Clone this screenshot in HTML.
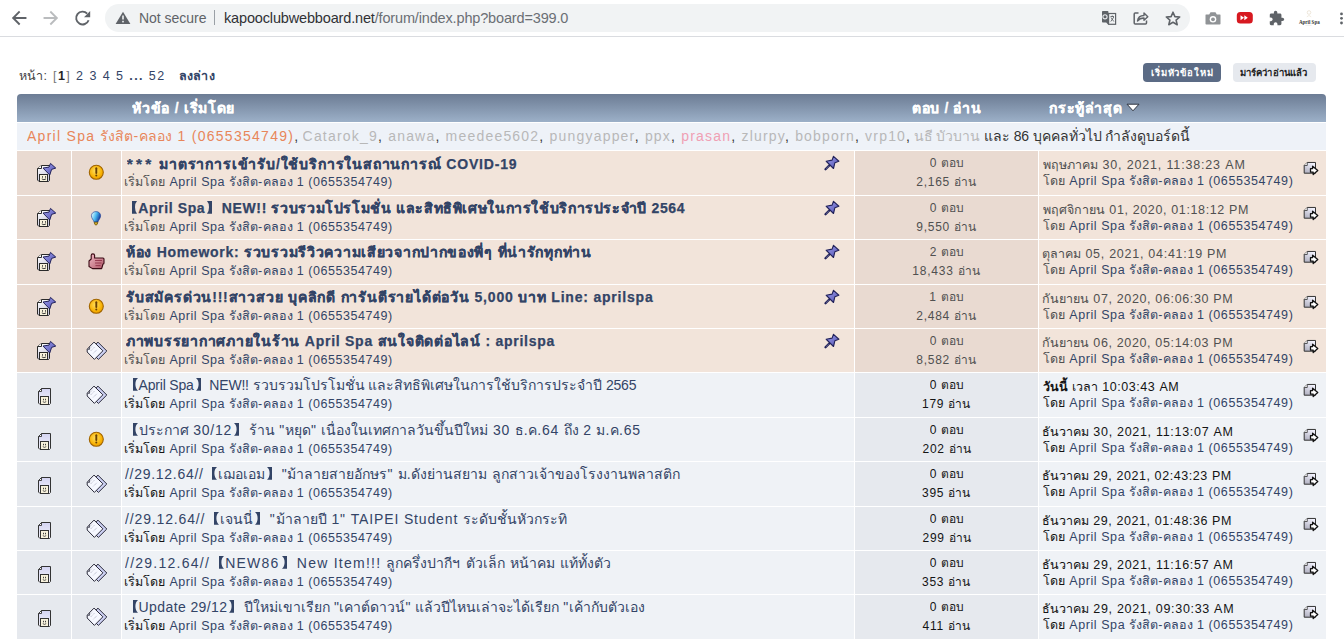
<!DOCTYPE html><html><head><meta charset="utf-8"><style>html,body{margin:0;padding:0}
body{width:1344px;height:640px;overflow:hidden;position:relative;background:#fff;font-family:"Liberation Sans",sans-serif}
.tx{position:absolute;white-space:nowrap;line-height:1}
.a{position:absolute}
svg{position:absolute;overflow:visible}
.tx .l{letter-spacing:var(--ls)}
</style></head><body><svg width="0" height="0" style="position:absolute"><defs>
<linearGradient id="gdoc" x1="0.2" y1="0" x2="0.6" y2="1"><stop offset="0" stop-color="#ffffff"/><stop offset="1" stop-color="#c4c4dc"/></linearGradient>
<linearGradient id="gdoc3" x1="0" y1="0" x2="0" y2="1"><stop offset="0" stop-color="#d4d4f2"/><stop offset="1" stop-color="#f4f4fc"/></linearGradient>
<linearGradient id="gthumb" x1="0" y1="0" x2="1" y2="1"><stop offset="0" stop-color="#f0b8c4"/><stop offset="1" stop-color="#b05868"/></linearGradient>
<linearGradient id="gdoc2" x1="0.7" y1="0" x2="0.2" y2="1"><stop offset="0" stop-color="#f4f4ff"/><stop offset="1" stop-color="#b0b0c0"/></linearGradient>
<radialGradient id="gexc" cx="0.45" cy="0.4" r="0.65"><stop offset="0" stop-color="#ffe060"/><stop offset="0.7" stop-color="#f8b000"/><stop offset="1" stop-color="#e89800"/></radialGradient>
<linearGradient id="gpin" x1="0" y1="0" x2="1" y2="1"><stop offset="0" stop-color="#a0a0ee"/><stop offset="1" stop-color="#5050b0"/></linearGradient>
<linearGradient id="gbulb" x1="0" y1="0.2" x2="1" y2="0.6"><stop offset="0" stop-color="#e8ffff"/><stop offset="0.5" stop-color="#48b8f0"/><stop offset="1" stop-color="#102a90"/></linearGradient>
<g id="ic_topic">
 <path d="M11.5 8.5H20.5V23.5L19.5 24.5H10L8.5 23V11.5Z" fill="url(#gdoc3)" stroke="#333" stroke-width="1"/>
 <path d="M8.5 11.5H11.5V8.5Z" fill="#fff" stroke="#333" stroke-width="0.9" stroke-linejoin="round"/>
 <rect x="10.5" y="16.5" width="8" height="8" fill="#f8f2dc" stroke="#333" stroke-width="1"/>
 <path d="M13.5 18.8v1.5M15.5 18.8v1.5" stroke="#444" stroke-width="1"/>
 <path d="M12.8 21.6Q14.5 23.2 16.2 21.6" fill="none" stroke="#444" stroke-width="0.9"/>
</g>
<g id="ic_pinned">
 <path d="M7.5 5.5H15.5V20.5L14.5 21.5H5L3.5 20V8.5Z" fill="url(#gdoc)" stroke="#2a2a2a" stroke-width="1"/>
 <path d="M3.5 8.5H7.5V5.5" fill="#fff" stroke="#2a2a2a" stroke-width="1"/>
 <path d="M16.5 3.4L21.75 8.06L17.6 9.4L15.75 15L9 8.06L15 7.1Z" fill="url(#gpin)" stroke="#22225a" stroke-width="1" stroke-linejoin="round"/>
 <rect x="5.5" y="14.5" width="8" height="7" fill="#f8f2dc" stroke="#2a2a2a" stroke-width="1"/>
 <path d="M8.5 16.2v1.5M11.5 16.2v1.5" stroke="#3a3a3a" stroke-width="1"/>
 <path d="M7.8 18.9Q9.9 20.5 12 18.9" fill="none" stroke="#3a3a3a" stroke-width="1"/>
</g>
<g id="ic_exc">
 <circle cx="14.3" cy="14.3" r="7" fill="url(#gexc)" stroke="#a06400" stroke-width="1.1"/>
 <path d="M14.3 10.2V15" stroke="#6a4000" stroke-width="1.9" stroke-linecap="round"/>
 <circle cx="14.3" cy="17.6" r="1" fill="#6a4000"/>
</g>
<g id="ic_xx">
 <path d="M15.9 6.1L24.8 15L16.4 23.4L8 15Z" fill="#ccd0f2" stroke="#2a2a3a" stroke-width="1" stroke-linejoin="round"/>
 <path d="M12 6.1L20.9 14.8L12.4 23.4L5.2 16V13.4L7 11.2Z" fill="#f6f8ff" stroke="#2a2a3a" stroke-width="1" stroke-linejoin="round"/>
 <path d="M5.4 13.3H7.6V11.2" fill="none" stroke="#2a2a3a" stroke-width="0.8"/>
 <path d="M9 11.5l1.6 -1.6M8.8 14.8l3.6 -3.6M11.3 17.3l3.6 -3.6" stroke="#9092a8" stroke-width="0.7" stroke-dasharray="1 0.9"/>
</g>
<g id="ic_bulb">
 <path d="M14 8.6C16.8 8.6 18.6 10.4 18.6 12.8C18.6 15.2 16.6 16.8 15.9 19H12.1C11.4 16.8 9.4 15.2 9.4 12.8C9.4 10.4 11.2 8.6 14 8.6Z" fill="url(#gbulb)" stroke="#183890" stroke-width="0.6"/>
 <path d="M12.1 19.2H15.9L15.3 21.2L14 22.2L12.7 21.2Z" fill="#d0a828" stroke="#4a3a00" stroke-width="0.6"/>
</g>
<g id="ic_thumb">
 <path d="M7 14L9.2 12V8.4C9.2 7.5 10 6.9 10.9 6.9C11.8 6.9 12.6 7.5 12.6 8.4V11H21A1 1 0 0 1 22 12V16A1 1 0 0 1 21 17L20 20.5A1 1 0 0 1 19 21.6H10.5L7 19.5Z" fill="url(#gthumb)" stroke="#3a0a14" stroke-width="1.1" stroke-linejoin="round"/>
 <path d="M13 13.5H20M13 16H19.5M13.5 18.6H18.5" stroke="#8a2a40" stroke-width="0.8"/>
</g>
<g id="ic_pin">
 <path d="M11.5 15.2L7.5 19.3" stroke="#22225a" stroke-width="2.3" stroke-linecap="round"/>
 <path d="M11 15.8L8 18.8" stroke="#d0d0e8" stroke-width="0.6" stroke-dasharray="0.8 0.9"/>
 <path d="M15.5 6.3L20.9 11.25L16.9 12.7L15.5 18.5L8.2 11.25L14.1 10.1Z" fill="url(#gpin)" stroke="#22225a" stroke-width="1.1" stroke-linejoin="round"/>
</g>
<g id="ic_last">
 <path d="M11.25 4.45H19.5V15.2H8.2V7.5Z" fill="url(#gdoc2)" stroke="#333" stroke-width="1"/>
 <path d="M8.2 7.5H11.25V4.45" fill="#fff" stroke="#333" stroke-width="0.8"/>
 <path d="M14.5 10.6H16.6V8.2L21.8 12.4L17.2 16.6V14.2H14.5Z" fill="#fff" stroke="#111" stroke-width="1.3" stroke-linejoin="round"/>
</g>
</defs></svg>
<div class="a" style="left:0;top:0;width:1344px;height:36px;background:#ffffff"></div>
<div class="a" style="left:0;top:36px;width:1344px;height:1px;background:#dadce0"></div>
<svg style="left:0;top:0" width="100" height="36"><g fill="none" stroke-width="1.9" stroke-linecap="square"><path d="M25.5 18H13.5M19 12.2L13.2 18L19 23.8" stroke="#5f6368"/><path d="M44.5 18H56.5M51 12.2L56.8 18L51 23.8" stroke="#babcbe"/><path d="M88.6 20.2A6.4 6.4 0 1 1 87.2 13.6" stroke="#5f6368" stroke-linecap="butt"/></g><path d="M90.2 11v6.2H84z" fill="#5f6368"/></svg>
<div class="a" style="left:105px;top:4px;width:1085px;height:28px;border-radius:14px;background:#f1f3f4"></div>
<svg style="left:0;top:0" width="140" height="36"><path d="M123 11.8L130.4 24H115.6z" fill="#5f6368"/><rect x="122.2" y="15.5" width="1.6" height="4" fill="#f1f3f4"/><rect x="122.2" y="20.8" width="1.6" height="1.6" fill="#f1f3f4"/></svg>
<div class="a" style="left:214px;top:10px;width:1px;height:15px;background:#9aa0a6"></div>
<svg style="left:1090px;top:0" width="254" height="36"><path d="M12.8 11H17.6A0.8 0.8 0 0 1 18.4 11.8V22.5H16.2L18 24.6V22.5H12.8A0.8 0.8 0 0 1 12 21.7V11.8A0.8 0.8 0 0 1 12.8 11Z" fill="#5f6368"/><circle cx="15" cy="16.8" r="2.1" fill="none" stroke="#e8eaed" stroke-width="1.1"/><rect x="18.6" y="13.5" width="7" height="10.8" fill="#f1f3f4" stroke="#5f6368" stroke-width="1.2"/><path d="M20.5 16.5H24M22.3 15.5V16.5M20.8 21.5L23.8 17M21 17.5L23.8 21.5" stroke="#5f6368" stroke-width="0.9"/><path d="M48.5 13H45.2A1 1 0 0 0 44.2 14V23A1 1 0 0 0 45.2 24H55.5A1 1 0 0 0 56.5 23V20.5" fill="none" stroke="#5f6368" stroke-width="1.5"/><path d="M47.5 21C48 17 51 15.5 54 15.5V13L57.8 16.8L54 20.3V18C51.5 18 49 19 47.5 21Z" fill="none" stroke="#5f6368" stroke-width="1.4" stroke-linejoin="round"/><path d="M83 12.2L84.9 16.6L89.7 17L86.1 20.1L87.2 24.7L83 22.3L78.8 24.7L79.9 20.1L76.3 17L81.1 16.6Z" fill="none" stroke="#5f6368" stroke-width="1.6" stroke-linejoin="round"/><path d="M116 14.5H119.2L120.5 12.3H125.5L126.8 14.5H130A0.8 0.8 0 0 1 130.5 15.3V23.8A0.8 0.8 0 0 1 129.7 24.6H116.3A0.8 0.8 0 0 1 115.5 23.8V15.3A0.8 0.8 0 0 1 116 14.5Z" fill="#909396"/><circle cx="123" cy="19.3" r="3.3" fill="#fff"/><circle cx="123" cy="19.3" r="1.9" fill="#909396"/><rect x="146.8" y="12" width="16" height="11.5" rx="3.5" fill="#d71920"/><path d="M150.5 15.2L154 17.75L150.5 20.3ZM154.3 15.2L157.8 17.75L154.3 20.3Z" fill="#fff"/><path transform="translate(178.4 10.1) scale(0.686)" d="M20.5 11H19V7c0-1.1-.9-2-2-2h-4V3.5C13 2.12 11.88 1 10.5 1S8 2.12 8 3.5V5H4c-1.1 0-1.99.9-1.99 2v3.8H3.5c1.49 0 2.7 1.21 2.7 2.7s-1.21 2.7-2.7 2.7H2V20c0 1.1.9 2 2 2h3.8v-1.5c0-1.49 1.21-2.7 2.7-2.7 1.49 0 2.7 1.21 2.7 2.7V22H17c1.1 0 2-.9 2-2v-4h1.5c1.38 0 2.5-1.12 2.5-2.5S21.88 11 20.5 11z" fill="#5f6368"/><circle cx="219" cy="12.5" r="1.8" fill="none" stroke="#e6dccb" stroke-width="0.7"/><path d="M216.8 16.8q2.2 -2.6 4.4 0" fill="none" stroke="#ebe3d3" stroke-width="0.7"/><text x="208.9" y="23.6" font-family="Liberation Serif" font-size="6.6" font-weight="bold" textLength="20.8" lengthAdjust="spacingAndGlyphs" fill="#333">April Spa</text><path d="M215.5 25.3h6" stroke="#dcdcdc" stroke-width="0.5"/><circle cx="251.5" cy="13.9" r="1.4" fill="#5f6368"/><circle cx="251.5" cy="18.3" r="1.4" fill="#5f6368"/><circle cx="251.5" cy="23" r="1.4" fill="#5f6368"/></svg>
<div class="a" style="left:1143px;top:63px;width:78px;height:19px;border-radius:4px;background:#5b6b85"></div>
<div class="a" style="left:1233px;top:63px;width:83px;height:19px;border-radius:4px;background:#e6e9ee"></div>
<div class="a" style="left:17px;top:94px;width:1309px;height:28px;border-radius:4px 4px 0 0;background:linear-gradient(#6c7c94,#9cb0c8)"></div>
<svg style="left:1126px;top:103px" width="14" height="9"><path d="M1 1.2H13L7 7.8Z" fill="#fff" stroke="#2e3440" stroke-width="1"/></svg>
<div class="a" style="left:17px;top:122px;width:1309px;height:1px;background:#ffffff"></div>
<div class="a" style="left:17px;top:123px;width:1309px;height:27px;background:#eef2f8"></div>
<div class="a" style="left:17px;top:150px;width:1309px;height:490px;background:#ffffff"></div>
<div class="a" style="left:17px;top:151px;width:54px;height:44px;background:#e9dad1"></div>
<div class="a" style="left:72px;top:151px;width:49px;height:44px;background:#e9dad1"></div>
<div class="a" style="left:122px;top:151px;width:732px;height:44px;background:#f2e4da"></div>
<div class="a" style="left:855px;top:151px;width:183px;height:44px;background:#e9dad1"></div>
<div class="a" style="left:1039px;top:151px;width:287px;height:44px;background:#f2e4da"></div>
<svg style="left:34px;top:160px" width="24" height="24"><use href="#ic_pinned"/></svg>
<svg style="left:82px;top:158px" width="30" height="30"><use href="#ic_exc"/></svg>
<svg style="left:818px;top:150px" width="30" height="30"><use href="#ic_pin"/></svg>
<svg style="left:1296px;top:158px" width="30" height="30"><use href="#ic_last"/></svg>
<div class="a" style="left:17px;top:196px;width:54px;height:43px;background:#e9dad1"></div>
<div class="a" style="left:72px;top:196px;width:49px;height:43px;background:#e9dad1"></div>
<div class="a" style="left:122px;top:196px;width:732px;height:43px;background:#f2e4da"></div>
<div class="a" style="left:855px;top:196px;width:183px;height:43px;background:#e9dad1"></div>
<div class="a" style="left:1039px;top:196px;width:287px;height:43px;background:#f2e4da"></div>
<svg style="left:34px;top:205px" width="24" height="24"><use href="#ic_pinned"/></svg>
<svg style="left:82px;top:203px" width="30" height="30"><use href="#ic_bulb"/></svg>
<svg style="left:818px;top:195px" width="30" height="30"><use href="#ic_pin"/></svg>
<svg style="left:1296px;top:203px" width="30" height="30"><use href="#ic_last"/></svg>
<div class="a" style="left:17px;top:240px;width:54px;height:44px;background:#e9dad1"></div>
<div class="a" style="left:72px;top:240px;width:49px;height:44px;background:#e9dad1"></div>
<div class="a" style="left:122px;top:240px;width:732px;height:44px;background:#f2e4da"></div>
<div class="a" style="left:855px;top:240px;width:183px;height:44px;background:#e9dad1"></div>
<div class="a" style="left:1039px;top:240px;width:287px;height:44px;background:#f2e4da"></div>
<svg style="left:34px;top:249px" width="24" height="24"><use href="#ic_pinned"/></svg>
<svg style="left:82px;top:247px" width="30" height="30"><use href="#ic_thumb"/></svg>
<svg style="left:818px;top:239px" width="30" height="30"><use href="#ic_pin"/></svg>
<svg style="left:1296px;top:247px" width="30" height="30"><use href="#ic_last"/></svg>
<div class="a" style="left:17px;top:285px;width:54px;height:43px;background:#e9dad1"></div>
<div class="a" style="left:72px;top:285px;width:49px;height:43px;background:#e9dad1"></div>
<div class="a" style="left:122px;top:285px;width:732px;height:43px;background:#f2e4da"></div>
<div class="a" style="left:855px;top:285px;width:183px;height:43px;background:#e9dad1"></div>
<div class="a" style="left:1039px;top:285px;width:287px;height:43px;background:#f2e4da"></div>
<svg style="left:34px;top:294px" width="24" height="24"><use href="#ic_pinned"/></svg>
<svg style="left:82px;top:292px" width="30" height="30"><use href="#ic_exc"/></svg>
<svg style="left:818px;top:284px" width="30" height="30"><use href="#ic_pin"/></svg>
<svg style="left:1296px;top:292px" width="30" height="30"><use href="#ic_last"/></svg>
<div class="a" style="left:17px;top:329px;width:54px;height:43px;background:#e9dad1"></div>
<div class="a" style="left:72px;top:329px;width:49px;height:43px;background:#e9dad1"></div>
<div class="a" style="left:122px;top:329px;width:732px;height:43px;background:#f2e4da"></div>
<div class="a" style="left:855px;top:329px;width:183px;height:43px;background:#e9dad1"></div>
<div class="a" style="left:1039px;top:329px;width:287px;height:43px;background:#f2e4da"></div>
<svg style="left:34px;top:338px" width="24" height="24"><use href="#ic_pinned"/></svg>
<svg style="left:82px;top:336px" width="30" height="30"><use href="#ic_xx"/></svg>
<svg style="left:818px;top:328px" width="30" height="30"><use href="#ic_pin"/></svg>
<svg style="left:1296px;top:336px" width="30" height="30"><use href="#ic_last"/></svg>
<div class="a" style="left:17px;top:373px;width:54px;height:44px;background:#e6e9ee"></div>
<div class="a" style="left:72px;top:373px;width:49px;height:44px;background:#e6e9ee"></div>
<div class="a" style="left:122px;top:373px;width:732px;height:44px;background:#eff2f6"></div>
<div class="a" style="left:855px;top:373px;width:183px;height:44px;background:#e6e9ee"></div>
<div class="a" style="left:1039px;top:373px;width:287px;height:44px;background:#eff2f6"></div>
<svg style="left:30px;top:380px" width="30" height="30"><use href="#ic_topic"/></svg>
<svg style="left:82px;top:380px" width="30" height="30"><use href="#ic_xx"/></svg>
<svg style="left:1296px;top:380px" width="30" height="30"><use href="#ic_last"/></svg>
<div class="a" style="left:17px;top:418px;width:54px;height:43px;background:#e6e9ee"></div>
<div class="a" style="left:72px;top:418px;width:49px;height:43px;background:#e6e9ee"></div>
<div class="a" style="left:122px;top:418px;width:732px;height:43px;background:#eff2f6"></div>
<div class="a" style="left:855px;top:418px;width:183px;height:43px;background:#e6e9ee"></div>
<div class="a" style="left:1039px;top:418px;width:287px;height:43px;background:#eff2f6"></div>
<svg style="left:30px;top:425px" width="30" height="30"><use href="#ic_topic"/></svg>
<svg style="left:82px;top:425px" width="30" height="30"><use href="#ic_exc"/></svg>
<svg style="left:1296px;top:425px" width="30" height="30"><use href="#ic_last"/></svg>
<div class="a" style="left:17px;top:462px;width:54px;height:44px;background:#e6e9ee"></div>
<div class="a" style="left:72px;top:462px;width:49px;height:44px;background:#e6e9ee"></div>
<div class="a" style="left:122px;top:462px;width:732px;height:44px;background:#eff2f6"></div>
<div class="a" style="left:855px;top:462px;width:183px;height:44px;background:#e6e9ee"></div>
<div class="a" style="left:1039px;top:462px;width:287px;height:44px;background:#eff2f6"></div>
<svg style="left:30px;top:469px" width="30" height="30"><use href="#ic_topic"/></svg>
<svg style="left:82px;top:469px" width="30" height="30"><use href="#ic_xx"/></svg>
<svg style="left:1296px;top:469px" width="30" height="30"><use href="#ic_last"/></svg>
<div class="a" style="left:17px;top:507px;width:54px;height:43px;background:#e6e9ee"></div>
<div class="a" style="left:72px;top:507px;width:49px;height:43px;background:#e6e9ee"></div>
<div class="a" style="left:122px;top:507px;width:732px;height:43px;background:#eff2f6"></div>
<div class="a" style="left:855px;top:507px;width:183px;height:43px;background:#e6e9ee"></div>
<div class="a" style="left:1039px;top:507px;width:287px;height:43px;background:#eff2f6"></div>
<svg style="left:30px;top:514px" width="30" height="30"><use href="#ic_topic"/></svg>
<svg style="left:82px;top:514px" width="30" height="30"><use href="#ic_xx"/></svg>
<svg style="left:1296px;top:514px" width="30" height="30"><use href="#ic_last"/></svg>
<div class="a" style="left:17px;top:551px;width:54px;height:43px;background:#e6e9ee"></div>
<div class="a" style="left:72px;top:551px;width:49px;height:43px;background:#e6e9ee"></div>
<div class="a" style="left:122px;top:551px;width:732px;height:43px;background:#eff2f6"></div>
<div class="a" style="left:855px;top:551px;width:183px;height:43px;background:#e6e9ee"></div>
<div class="a" style="left:1039px;top:551px;width:287px;height:43px;background:#eff2f6"></div>
<svg style="left:30px;top:558px" width="30" height="30"><use href="#ic_topic"/></svg>
<svg style="left:82px;top:558px" width="30" height="30"><use href="#ic_xx"/></svg>
<svg style="left:1296px;top:558px" width="30" height="30"><use href="#ic_last"/></svg>
<div class="a" style="left:17px;top:595px;width:54px;height:44px;background:#e6e9ee"></div>
<div class="a" style="left:72px;top:595px;width:49px;height:44px;background:#e6e9ee"></div>
<div class="a" style="left:122px;top:595px;width:732px;height:44px;background:#eff2f6"></div>
<div class="a" style="left:855px;top:595px;width:183px;height:44px;background:#e6e9ee"></div>
<div class="a" style="left:1039px;top:595px;width:287px;height:44px;background:#eff2f6"></div>
<svg style="left:30px;top:602px" width="30" height="30"><use href="#ic_topic"/></svg>
<svg style="left:82px;top:602px" width="30" height="30"><use href="#ic_xx"/></svg>
<svg style="left:1296px;top:602px" width="30" height="30"><use href="#ic_last"/></svg>
<div id="t0" class="tx g_misc" style="width:72.6px;overflow-x:clip;left:139.00px;top:11px;font-size:14px;color:#5f6368;font-weight:normal;letter-spacing:-0.022px">Not secure</div>
<div id="t1" class="tx g_misc" style="width:350.0px;overflow-x:clip;left:224.00px;top:11px;font-size:14.5px;color:#6b6f74;font-weight:normal;letter-spacing:-0.156px"><span style="color:#303134">kapooclubwebboard.net</span>/forum/index.php?board=399.0</div>
<div id="t2" class="tx g_misc" style="width:33.1px;overflow-x:clip;left:19.20px;top:70px;font-size:12.5px;color:#444;font-weight:normal;letter-spacing:0.135px">หน้า:</div>
<div id="t3" class="tx g_misc" style="width:117.1px;overflow-x:clip;left:53.00px;top:70px;font-size:12.5px;color:#444;font-weight:normal;letter-spacing:1.429px"><span style="color:#777">[<b style="color:#222">1</b>]</span> <span style="color:#334466">2 3 4 5 <b>...</b> 52</span></div>
<div id="t4" class="tx g_misc" style="width:42.5px;overflow-x:clip;left:178.59px;top:70px;font-size:12.5px;color:#334466;font-weight:normal;letter-spacing:0.275px"><b>ลงล่าง</b></div>
<div id="t5" class="tx g_misc" style="width:67.4px;overflow-x:clip;left:1151.20px;top:68px;font-size:9.5px;color:#ffffff;font-weight:normal;letter-spacing:0.822px"><b>เริ่มหัวข้อใหม่</b></div>
<div id="t6" class="tx g_misc" style="width:73.0px;overflow-x:clip;left:1240.00px;top:68px;font-size:9.5px;color:#222222;font-weight:normal;letter-spacing:0.091px"><b>มาร์คว่าอ่านแล้ว</b></div>
<div id="t7" class="tx g_misc" style="width:107.6px;overflow-x:clip;left:132.39px;top:101px;font-size:14px;color:#ffffff;font-weight:normal;letter-spacing:0.683px"><b style="-webkit-text-stroke:0.3px #fff">หัวข้อ / เริ่มโดย</b></div>
<div id="t8" class="tx g_misc" style="width:75.0px;overflow-x:clip;left:912.00px;top:101px;font-size:14px;color:#ffffff;font-weight:normal;letter-spacing:0.625px"><b style="-webkit-text-stroke:0.3px #fff">ตอบ / อ่าน</b></div>
<div id="t9" class="tx g_misc" style="width:78.8px;overflow-x:clip;left:1049.20px;top:101px;font-size:14px;color:#ffffff;font-weight:normal;letter-spacing:0.657px"><b style="-webkit-text-stroke:0.3px #fff">กระทู้ล่าสุด</b></div>
<div id="t10" class="tx g_info1" style="width:275.7px;overflow-x:clip;left:27.00px;top:129px;font-size:14px;color:#333333;font-weight:normal;--ls:1.273px"><span style="color:#e8865a"><span class="l">April Spa </span>รังสิต<span class="l">-</span>คลอง<span class="l"> 1 (0655354749)</span></span><span class="l">,</span></div>
<div id="t11" class="tx g_info2" style="width:612.4px;overflow-x:clip;left:302.59px;top:129px;font-size:14px;color:#333333;font-weight:normal;--ls:1.199px"><span style="color:#b8b8b8"><span class="l">Catarok_9</span></span><span class="l">, </span><span style="color:#b8b8b8"><span class="l">anawa</span></span><span class="l">, </span><span style="color:#b8b8b8"><span class="l">meedee5602</span></span><span class="l">, </span><span style="color:#b8b8b8"><span class="l">pungyapper</span></span><span class="l">, </span><span style="color:#b8b8b8"><span class="l">ppx</span></span><span class="l">, </span><span style="color:#f0a0b4"><span class="l">prasan</span></span><span class="l">, </span><span style="color:#b8b8b8"><span class="l">zlurpy</span></span><span class="l">, </span><span style="color:#b8b8b8"><span class="l">bobporn</span></span><span class="l">, </span><span style="color:#b8b8b8"><span class="l">vrp10</span></span><span class="l">,</span></div>
<div id="t12" class="tx g_info1" style="width:282.2px;overflow-x:clip;left:913.79px;top:129px;font-size:14px;color:#333333;font-weight:normal;--ls:-0.229px"><span style="color:#b8b8b8">นธี<span class="l"> </span>บัวบาน</span><span class="l"> </span>และ<span class="l"> 86 </span>บุคคลทั่วไป<span class="l"> </span>กำลังดูบอร์ดนี้</div>
<div id="t13" class="tx g_subj" style="width:395.2px;overflow-x:clip;left:126.79px;top:156px;font-size:14px;color:#334466;font-weight:bold;letter-spacing:0.823px"><span style="-webkit-text-stroke:0.25px currentColor"><span style="font-size:15.5px;letter-spacing:3.2px">***</span> มาตราการเข้ารับ/ใช้บริการในสถานการณ์ COVID-19</span></div>
<div id="t14" class="tx g_start" style="width:273.6px;overflow-x:clip;left:124.39px;top:176px;font-size:12.5px;color:#505050;font-weight:normal;--ls:0.546px"><span style="color:#505050">เริ่มโดย</span><span class="l"> </span><span style="color:#334466"><span class="l">April Spa </span>รังสิต<span class="l">-</span>คลอง<span class="l"> 1 (0655354749)</span></span></div>
<div id="t15" class="tx g_st1" style="width:39.5px;overflow-x:clip;left:929.73px;top:157px;font-size:12px;color:#505050;font-weight:normal;--ls:0.767px"><span class="l">0 </span>ตอบ</div>
<div id="t16" class="tx g_st2" style="width:66.6px;overflow-x:clip;left:916.20px;top:176px;font-size:12px;color:#505050;font-weight:normal;--ls:0.767px"><span class="l">2,165 </span>อ่าน</div>
<div id="t17" class="tx g_lp1" style="width:206.8px;overflow-x:clip;left:1043.20px;top:159px;font-size:12.5px;color:#505050;font-weight:normal;--ls:0.838px">พฤษภาคม<span class="l"> 30, 2021, 11:38:23 AM</span></div>
<div id="t18" class="tx g_lp2" style="width:254.6px;overflow-x:clip;left:1043.20px;top:175px;font-size:12.5px;color:#505050;font-weight:normal;--ls:0.577px"><span style="color:#505050">โดย</span><span class="l"> </span><span style="color:#334466"><span class="l">April Spa </span>รังสิต<span class="l">-</span>คลอง<span class="l"> 1 (0655354749)</span></span></div>
<div id="t19" class="tx g_subj" style="width:562.5px;overflow-x:clip;left:128.20px;top:201px;font-size:14px;color:#334466;font-weight:bold;letter-spacing:0.626px"><span style="-webkit-text-stroke:0.25px currentColor"><svg style="position:static;vertical-align:-1px;margin:0 1px 0 4px" width="5" height="12.7" viewBox="0 0 5 12.7"><path d="M0 0H5Q3.0 2 3.0 6.35Q3.0 10.7 5 12.7H0Z" fill="currentColor"/></svg>April Spa<svg style="position:static;vertical-align:-1px;margin:0 5px 0 2px" width="5" height="12.7" viewBox="0 0 5 12.7"><path d="M5 0H0Q2.0 2 2.0 6.35Q2.0 10.7 0 12.7H5Z" fill="currentColor"/></svg> NEW!! รวบรวมโปรโมชั่น และสิทธิพิเศษในการใช้บริการประจำปี 2564</span></div>
<div id="t20" class="tx g_start" style="width:273.6px;overflow-x:clip;left:124.39px;top:221px;font-size:12.5px;color:#505050;font-weight:normal;--ls:0.546px"><span style="color:#505050">เริ่มโดย</span><span class="l"> </span><span style="color:#334466"><span class="l">April Spa </span>รังสิต<span class="l">-</span>คลอง<span class="l"> 1 (0655354749)</span></span></div>
<div id="t21" class="tx g_st1" style="width:39.5px;overflow-x:clip;left:929.73px;top:202px;font-size:12px;color:#505050;font-weight:normal;--ls:0.767px"><span class="l">0 </span>ตอบ</div>
<div id="t22" class="tx g_st2" style="width:66.6px;overflow-x:clip;left:916.20px;top:221px;font-size:12px;color:#505050;font-weight:normal;--ls:0.767px"><span class="l">9,550 </span>อ่าน</div>
<div id="t23" class="tx g_lp1" style="width:210.7px;overflow-x:clip;left:1043.20px;top:204px;font-size:12.5px;color:#505050;font-weight:normal;--ls:0.633px">พฤศจิกายน<span class="l"> 01, 2020, 01:18:12 PM</span></div>
<div id="t24" class="tx g_lp2" style="width:254.6px;overflow-x:clip;left:1043.20px;top:220px;font-size:12.5px;color:#505050;font-weight:normal;--ls:0.577px"><span style="color:#505050">โดย</span><span class="l"> </span><span style="color:#334466"><span class="l">April Spa </span>รังสิต<span class="l">-</span>คลอง<span class="l"> 1 (0655354749)</span></span></div>
<div id="t25" class="tx g_subj" style="width:471.0px;overflow-x:clip;left:126.00px;top:245px;font-size:14px;color:#334466;font-weight:bold;letter-spacing:0.712px"><span style="-webkit-text-stroke:0.25px currentColor">ห้อง Homework: รวบรวมรีวิวความเสียวจากปากของพี่ๆ ที่น่ารักทุกท่าน</span></div>
<div id="t26" class="tx g_start" style="width:273.6px;overflow-x:clip;left:124.39px;top:265px;font-size:12.5px;color:#505050;font-weight:normal;--ls:0.546px"><span style="color:#505050">เริ่มโดย</span><span class="l"> </span><span style="color:#334466"><span class="l">April Spa </span>รังสิต<span class="l">-</span>คลอง<span class="l"> 1 (0655354749)</span></span></div>
<div id="t27" class="tx g_st1" style="width:39.5px;overflow-x:clip;left:929.73px;top:246px;font-size:12px;color:#505050;font-weight:normal;--ls:0.767px"><span class="l">2 </span>ตอบ</div>
<div id="t28" class="tx g_st2" style="width:74.4px;overflow-x:clip;left:912.32px;top:265px;font-size:12px;color:#505050;font-weight:normal;--ls:0.767px"><span class="l">18,433 </span>อ่าน</div>
<div id="t29" class="tx g_lp1" style="width:189.4px;overflow-x:clip;left:1042.20px;top:248px;font-size:12.5px;color:#505050;font-weight:normal;--ls:0.733px">ตุลาคม<span class="l"> 05, 2021, 04:41:19 PM</span></div>
<div id="t30" class="tx g_lp2" style="width:254.6px;overflow-x:clip;left:1043.20px;top:264px;font-size:12.5px;color:#505050;font-weight:normal;--ls:0.577px"><span style="color:#505050">โดย</span><span class="l"> </span><span style="color:#334466"><span class="l">April Spa </span>รังสิต<span class="l">-</span>คลอง<span class="l"> 1 (0655354749)</span></span></div>
<div id="t31" class="tx g_subj" style="width:533.4px;overflow-x:clip;left:126.00px;top:290px;font-size:14px;color:#334466;font-weight:bold;letter-spacing:0.797px"><span style="-webkit-text-stroke:0.25px currentColor">รับสมัครด่วน!!!สาวสวย บุคลิกดี การันตีรายได้ต่อวัน 5,000 บาท Line: aprilspa</span></div>
<div id="t32" class="tx g_start" style="width:273.6px;overflow-x:clip;left:124.39px;top:310px;font-size:12.5px;color:#505050;font-weight:normal;--ls:0.546px"><span style="color:#505050">เริ่มโดย</span><span class="l"> </span><span style="color:#334466"><span class="l">April Spa </span>รังสิต<span class="l">-</span>คลอง<span class="l"> 1 (0655354749)</span></span></div>
<div id="t33" class="tx g_st1" style="width:40.5px;overflow-x:clip;left:929.23px;top:291px;font-size:12px;color:#505050;font-weight:normal;--ls:0.767px"><span class="l">1 </span>ตอบ</div>
<div id="t34" class="tx g_st2" style="width:66.6px;overflow-x:clip;left:916.20px;top:310px;font-size:12px;color:#505050;font-weight:normal;--ls:0.767px"><span class="l">2,484 </span>อ่าน</div>
<div id="t35" class="tx g_lp1" style="width:196.1px;overflow-x:clip;left:1042.20px;top:293px;font-size:12.5px;color:#505050;font-weight:normal;--ls:0.643px">กันยายน<span class="l"> 07, 2020, 06:06:30 PM</span></div>
<div id="t36" class="tx g_lp2" style="width:254.6px;overflow-x:clip;left:1043.20px;top:309px;font-size:12.5px;color:#505050;font-weight:normal;--ls:0.577px"><span style="color:#505050">โดย</span><span class="l"> </span><span style="color:#334466"><span class="l">April Spa </span>รังสิต<span class="l">-</span>คลอง<span class="l"> 1 (0655354749)</span></span></div>
<div id="t37" class="tx g_subj" style="width:435.0px;overflow-x:clip;left:126.00px;top:334px;font-size:14px;color:#334466;font-weight:bold;letter-spacing:0.745px"><span style="-webkit-text-stroke:0.25px currentColor">ภาพบรรยากาศภายในร้าน April Spa สนใจติดต่อไลน์ : aprilspa</span></div>
<div id="t38" class="tx g_start" style="width:273.6px;overflow-x:clip;left:124.39px;top:354px;font-size:12.5px;color:#505050;font-weight:normal;--ls:0.546px"><span style="color:#505050">เริ่มโดย</span><span class="l"> </span><span style="color:#334466"><span class="l">April Spa </span>รังสิต<span class="l">-</span>คลอง<span class="l"> 1 (0655354749)</span></span></div>
<div id="t39" class="tx g_st1" style="width:39.5px;overflow-x:clip;left:929.73px;top:335px;font-size:12px;color:#505050;font-weight:normal;--ls:0.767px"><span class="l">0 </span>ตอบ</div>
<div id="t40" class="tx g_st2" style="width:66.6px;overflow-x:clip;left:916.20px;top:354px;font-size:12px;color:#505050;font-weight:normal;--ls:0.767px"><span class="l">8,582 </span>อ่าน</div>
<div id="t41" class="tx g_lp1" style="width:196.1px;overflow-x:clip;left:1042.20px;top:337px;font-size:12.5px;color:#505050;font-weight:normal;--ls:0.643px">กันยายน<span class="l"> 06, 2020, 05:14:03 PM</span></div>
<div id="t42" class="tx g_lp2" style="width:254.6px;overflow-x:clip;left:1043.20px;top:353px;font-size:12.5px;color:#505050;font-weight:normal;--ls:0.577px"><span style="color:#505050">โดย</span><span class="l"> </span><span style="color:#334466"><span class="l">April Spa </span>รังสิต<span class="l">-</span>คลอง<span class="l"> 1 (0655354749)</span></span></div>
<div id="t43" class="tx g_subj" style="width:513.6px;overflow-x:clip;left:128.59px;top:378px;font-size:14px;color:#334466;font-weight:normal;--ls:-0.195px"><svg style="position:static;vertical-align:-1px;margin:0 1px 0 4px" width="5" height="12.7" viewBox="0 0 5 12.7"><path d="M0 0H5Q2.4 2 2.4 6.35Q2.4 10.7 5 12.7H0Z" fill="currentColor"/></svg><span class="l">April Spa</span><svg style="position:static;vertical-align:-1px;margin:0 5px 0 2px" width="5" height="12.7" viewBox="0 0 5 12.7"><path d="M5 0H0Q2.6 2 2.6 6.35Q2.6 10.7 0 12.7H5Z" fill="currentColor"/></svg><span class="l"> NEW!! </span>รวบรวมโปรโมชั่น<span class="l"> </span>และสิทธิพิเศษในการใช้บริการประจำปี<span class="l"> 2565</span></div>
<div id="t44" class="tx g_start" style="width:273.6px;overflow-x:clip;left:124.39px;top:398px;font-size:12.5px;color:#141414;font-weight:normal;--ls:0.546px"><span style="color:#141414">เริ่มโดย</span><span class="l"> </span><span style="color:#334466"><span class="l">April Spa </span>รังสิต<span class="l">-</span>คลอง<span class="l"> 1 (0655354749)</span></span></div>
<div id="t45" class="tx g_st1" style="width:39.5px;overflow-x:clip;left:929.73px;top:379px;font-size:12px;color:#141414;font-weight:normal;--ls:0.767px"><span class="l">0 </span>ตอบ</div>
<div id="t46" class="tx g_st2" style="width:55.1px;overflow-x:clip;left:921.97px;top:398px;font-size:12px;color:#141414;font-weight:normal;--ls:0.767px"><span class="l">179 </span>อ่าน</div>
<div id="t47" class="tx g_lp1" style="width:140.5px;overflow-x:clip;left:1043.20px;top:381px;font-size:12.5px;color:#141414;font-weight:normal;--ls:0.558px"><b>วันนี้</b><span class="l"> </span>เวลา<span class="l"> 10:03:43 AM</span></div>
<div id="t48" class="tx g_lp2" style="width:254.6px;overflow-x:clip;left:1043.20px;top:397px;font-size:12.5px;color:#141414;font-weight:normal;--ls:0.577px"><span style="color:#141414">โดย</span><span class="l"> </span><span style="color:#334466"><span class="l">April Spa </span>รังสิต<span class="l">-</span>คลอง<span class="l"> 1 (0655354749)</span></span></div>
<div id="t49" class="tx g_subj" style="width:517.4px;overflow-x:clip;left:128.59px;top:423px;font-size:14px;color:#334466;font-weight:normal;--ls:0.742px"><svg style="position:static;vertical-align:-1px;margin:0 1px 0 4px" width="5" height="12.7" viewBox="0 0 5 12.7"><path d="M0 0H5Q2.4 2 2.4 6.35Q2.4 10.7 5 12.7H0Z" fill="currentColor"/></svg>ประกาศ<span class="l"> 30/12</span><svg style="position:static;vertical-align:-1px;margin:0 5px 0 2px" width="5" height="12.7" viewBox="0 0 5 12.7"><path d="M5 0H0Q2.6 2 2.6 6.35Q2.6 10.7 0 12.7H5Z" fill="currentColor"/></svg><span class="l"> </span>ร้าน<span class="l"> "</span>หยุด<span class="l">" </span>เนื่องในเทศกาลวันขึ้นปีใหม่<span class="l"> 30 </span>ธ<span class="l">.</span>ค<span class="l">.64 </span>ถึง<span class="l"> 2 </span>ม<span class="l">.</span>ค<span class="l">.65</span></div>
<div id="t50" class="tx g_start" style="width:273.6px;overflow-x:clip;left:124.39px;top:443px;font-size:12.5px;color:#141414;font-weight:normal;--ls:0.546px"><span style="color:#141414">เริ่มโดย</span><span class="l"> </span><span style="color:#334466"><span class="l">April Spa </span>รังสิต<span class="l">-</span>คลอง<span class="l"> 1 (0655354749)</span></span></div>
<div id="t51" class="tx g_st1" style="width:39.5px;overflow-x:clip;left:929.73px;top:424px;font-size:12px;color:#141414;font-weight:normal;--ls:0.767px"><span class="l">0 </span>ตอบ</div>
<div id="t52" class="tx g_st2" style="width:54.1px;overflow-x:clip;left:922.47px;top:443px;font-size:12px;color:#141414;font-weight:normal;--ls:0.767px"><span class="l">202 </span>อ่าน</div>
<div id="t53" class="tx g_lp1" style="width:195.5px;overflow-x:clip;left:1042.20px;top:426px;font-size:12.5px;color:#141414;font-weight:normal;--ls:0.700px">ธันวาคม<span class="l"> 30, 2021, 11:13:07 AM</span></div>
<div id="t54" class="tx g_lp2" style="width:254.6px;overflow-x:clip;left:1043.20px;top:442px;font-size:12.5px;color:#141414;font-weight:normal;--ls:0.577px"><span style="color:#141414">โดย</span><span class="l"> </span><span style="color:#334466"><span class="l">April Spa </span>รังสิต<span class="l">-</span>คลอง<span class="l"> 1 (0655354749)</span></span></div>
<div id="t55" class="tx g_subj" style="width:561.5px;overflow-x:clip;left:125.00px;top:467px;font-size:14px;color:#334466;font-weight:normal;--ls:0.711px"><span class="l">//29.12.64// </span><svg style="position:static;vertical-align:-1px;margin:0 1px 0 4px" width="5" height="12.7" viewBox="0 0 5 12.7"><path d="M0 0H5Q2.4 2 2.4 6.35Q2.4 10.7 5 12.7H0Z" fill="currentColor"/></svg>เฌอเอม<svg style="position:static;vertical-align:-1px;margin:0 5px 0 2px" width="5" height="12.7" viewBox="0 0 5 12.7"><path d="M5 0H0Q2.6 2 2.6 6.35Q2.6 10.7 0 12.7H5Z" fill="currentColor"/></svg><span class="l"> "</span>ม้าลายสายอักษร<span class="l">" </span>ม<span class="l">.</span>ดังย่านสยาม<span class="l"> </span>ลูกสาวเจ้าของโรงงานพลาสติก</div>
<div id="t56" class="tx g_start" style="width:273.6px;overflow-x:clip;left:124.39px;top:487px;font-size:12.5px;color:#141414;font-weight:normal;--ls:0.546px"><span style="color:#141414">เริ่มโดย</span><span class="l"> </span><span style="color:#334466"><span class="l">April Spa </span>รังสิต<span class="l">-</span>คลอง<span class="l"> 1 (0655354749)</span></span></div>
<div id="t57" class="tx g_st1" style="width:39.5px;overflow-x:clip;left:929.73px;top:468px;font-size:12px;color:#141414;font-weight:normal;--ls:0.767px"><span class="l">0 </span>ตอบ</div>
<div id="t58" class="tx g_st2" style="width:55.1px;overflow-x:clip;left:921.97px;top:487px;font-size:12px;color:#141414;font-weight:normal;--ls:0.767px"><span class="l">395 </span>อ่าน</div>
<div id="t59" class="tx g_lp1" style="width:194.3px;overflow-x:clip;left:1042.20px;top:470px;font-size:12.5px;color:#141414;font-weight:normal;--ls:0.576px">ธันวาคม<span class="l"> 29, 2021, 02:43:23 PM</span></div>
<div id="t60" class="tx g_lp2" style="width:254.6px;overflow-x:clip;left:1043.20px;top:486px;font-size:12.5px;color:#141414;font-weight:normal;--ls:0.577px"><span style="color:#141414">โดย</span><span class="l"> </span><span style="color:#334466"><span class="l">April Spa </span>รังสิต<span class="l">-</span>คลอง<span class="l"> 1 (0655354749)</span></span></div>
<div id="t61" class="tx g_subj" style="width:448.4px;overflow-x:clip;left:125.00px;top:512px;font-size:14px;color:#334466;font-weight:normal;--ls:0.859px"><span class="l">//29.12.64// </span><svg style="position:static;vertical-align:-1px;margin:0 1px 0 4px" width="5" height="12.7" viewBox="0 0 5 12.7"><path d="M0 0H5Q2.4 2 2.4 6.35Q2.4 10.7 5 12.7H0Z" fill="currentColor"/></svg>เจนนี่<svg style="position:static;vertical-align:-1px;margin:0 5px 0 2px" width="5" height="12.7" viewBox="0 0 5 12.7"><path d="M5 0H0Q2.6 2 2.6 6.35Q2.6 10.7 0 12.7H5Z" fill="currentColor"/></svg><span class="l"> "</span>ม้าลายปี<span class="l"> 1" TAIPEI Student </span>ระดับชั้นหัวกระทิ</div>
<div id="t62" class="tx g_start" style="width:273.6px;overflow-x:clip;left:124.39px;top:532px;font-size:12.5px;color:#141414;font-weight:normal;--ls:0.546px"><span style="color:#141414">เริ่มโดย</span><span class="l"> </span><span style="color:#334466"><span class="l">April Spa </span>รังสิต<span class="l">-</span>คลอง<span class="l"> 1 (0655354749)</span></span></div>
<div id="t63" class="tx g_st1" style="width:39.5px;overflow-x:clip;left:929.73px;top:513px;font-size:12px;color:#141414;font-weight:normal;--ls:0.767px"><span class="l">0 </span>ตอบ</div>
<div id="t64" class="tx g_st2" style="width:54.1px;overflow-x:clip;left:922.47px;top:532px;font-size:12px;color:#141414;font-weight:normal;--ls:0.767px"><span class="l">299 </span>อ่าน</div>
<div id="t65" class="tx g_lp1" style="width:194.7px;overflow-x:clip;left:1042.20px;top:515px;font-size:12.5px;color:#141414;font-weight:normal;--ls:0.586px">ธันวาคม<span class="l"> 29, 2021, 01:48:36 PM</span></div>
<div id="t66" class="tx g_lp2" style="width:254.6px;overflow-x:clip;left:1043.20px;top:531px;font-size:12.5px;color:#141414;font-weight:normal;--ls:0.577px"><span style="color:#141414">โดย</span><span class="l"> </span><span style="color:#334466"><span class="l">April Spa </span>รังสิต<span class="l">-</span>คลอง<span class="l"> 1 (0655354749)</span></span></div>
<div id="t67" class="tx g_subj" style="width:490.8px;overflow-x:clip;left:125.00px;top:556px;font-size:14px;color:#334466;font-weight:normal;--ls:1.247px"><span class="l">//29.12.64// </span><svg style="position:static;vertical-align:-1px;margin:0 1px 0 4px" width="5" height="12.7" viewBox="0 0 5 12.7"><path d="M0 0H5Q2.4 2 2.4 6.35Q2.4 10.7 5 12.7H0Z" fill="currentColor"/></svg><span class="l">NEW86</span><svg style="position:static;vertical-align:-1px;margin:0 5px 0 2px" width="5" height="12.7" viewBox="0 0 5 12.7"><path d="M5 0H0Q2.6 2 2.6 6.35Q2.6 10.7 0 12.7H5Z" fill="currentColor"/></svg><span class="l"> New Item!!! </span>ลูกครึ่งปากีฯ<span class="l"> </span>ตัวเล็ก<span class="l"> </span>หน้าคม<span class="l"> </span>แท้ทั้งตัว</div>
<div id="t68" class="tx g_start" style="width:273.6px;overflow-x:clip;left:124.39px;top:576px;font-size:12.5px;color:#141414;font-weight:normal;--ls:0.546px"><span style="color:#141414">เริ่มโดย</span><span class="l"> </span><span style="color:#334466"><span class="l">April Spa </span>รังสิต<span class="l">-</span>คลอง<span class="l"> 1 (0655354749)</span></span></div>
<div id="t69" class="tx g_st1" style="width:39.5px;overflow-x:clip;left:929.73px;top:557px;font-size:12px;color:#141414;font-weight:normal;--ls:0.767px"><span class="l">0 </span>ตอบ</div>
<div id="t70" class="tx g_st2" style="width:55.1px;overflow-x:clip;left:921.97px;top:576px;font-size:12px;color:#141414;font-weight:normal;--ls:0.767px"><span class="l">353 </span>อ่าน</div>
<div id="t71" class="tx g_lp1" style="width:195.5px;overflow-x:clip;left:1042.20px;top:559px;font-size:12.5px;color:#141414;font-weight:normal;--ls:0.700px">ธันวาคม<span class="l"> 29, 2021, 11:16:57 AM</span></div>
<div id="t72" class="tx g_lp2" style="width:254.6px;overflow-x:clip;left:1043.20px;top:575px;font-size:12.5px;color:#141414;font-weight:normal;--ls:0.577px"><span style="color:#141414">โดย</span><span class="l"> </span><span style="color:#334466"><span class="l">April Spa </span>รังสิต<span class="l">-</span>คลอง<span class="l"> 1 (0655354749)</span></span></div>
<div id="t73" class="tx g_subj" style="width:521.2px;overflow-x:clip;left:128.59px;top:600px;font-size:14px;color:#334466;font-weight:normal;--ls:0.397px"><svg style="position:static;vertical-align:-1px;margin:0 1px 0 4px" width="5" height="12.7" viewBox="0 0 5 12.7"><path d="M0 0H5Q2.4 2 2.4 6.35Q2.4 10.7 5 12.7H0Z" fill="currentColor"/></svg><span class="l">Update 29/12</span><svg style="position:static;vertical-align:-1px;margin:0 5px 0 2px" width="5" height="12.7" viewBox="0 0 5 12.7"><path d="M5 0H0Q2.6 2 2.6 6.35Q2.6 10.7 0 12.7H5Z" fill="currentColor"/></svg><span class="l"> </span>ปีใหม่เขาเรียก<span class="l"> "</span>เคาต์ดาวน์<span class="l">" </span>แล้วปีไหนเล่าจะได้เรียก<span class="l"> "</span>เค้ากับตัวเอง</div>
<div id="t74" class="tx g_start" style="width:273.6px;overflow-x:clip;left:124.39px;top:620px;font-size:12.5px;color:#141414;font-weight:normal;--ls:0.546px"><span style="color:#141414">เริ่มโดย</span><span class="l"> </span><span style="color:#334466"><span class="l">April Spa </span>รังสิต<span class="l">-</span>คลอง<span class="l"> 1 (0655354749)</span></span></div>
<div id="t75" class="tx g_st1" style="width:39.5px;overflow-x:clip;left:929.73px;top:601px;font-size:12px;color:#141414;font-weight:normal;--ls:0.767px"><span class="l">0 </span>ตอบ</div>
<div id="t76" class="tx g_st2" style="width:54.1px;overflow-x:clip;left:922.47px;top:620px;font-size:12px;color:#141414;font-weight:normal;--ls:0.767px"><span class="l">411 </span>อ่าน</div>
<div id="t77" class="tx g_lp1" style="width:196.4px;overflow-x:clip;left:1042.20px;top:603px;font-size:12.5px;color:#141414;font-weight:normal;--ls:0.686px">ธันวาคม<span class="l"> 29, 2021, 09:30:33 AM</span></div>
<div id="t78" class="tx g_lp2" style="width:254.6px;overflow-x:clip;left:1043.20px;top:619px;font-size:12.5px;color:#141414;font-weight:normal;--ls:0.577px"><span style="color:#141414">โดย</span><span class="l"> </span><span style="color:#334466"><span class="l">April Spa </span>รังสิต<span class="l">-</span>คลอง<span class="l"> 1 (0655354749)</span></span></div>
</body></html>
